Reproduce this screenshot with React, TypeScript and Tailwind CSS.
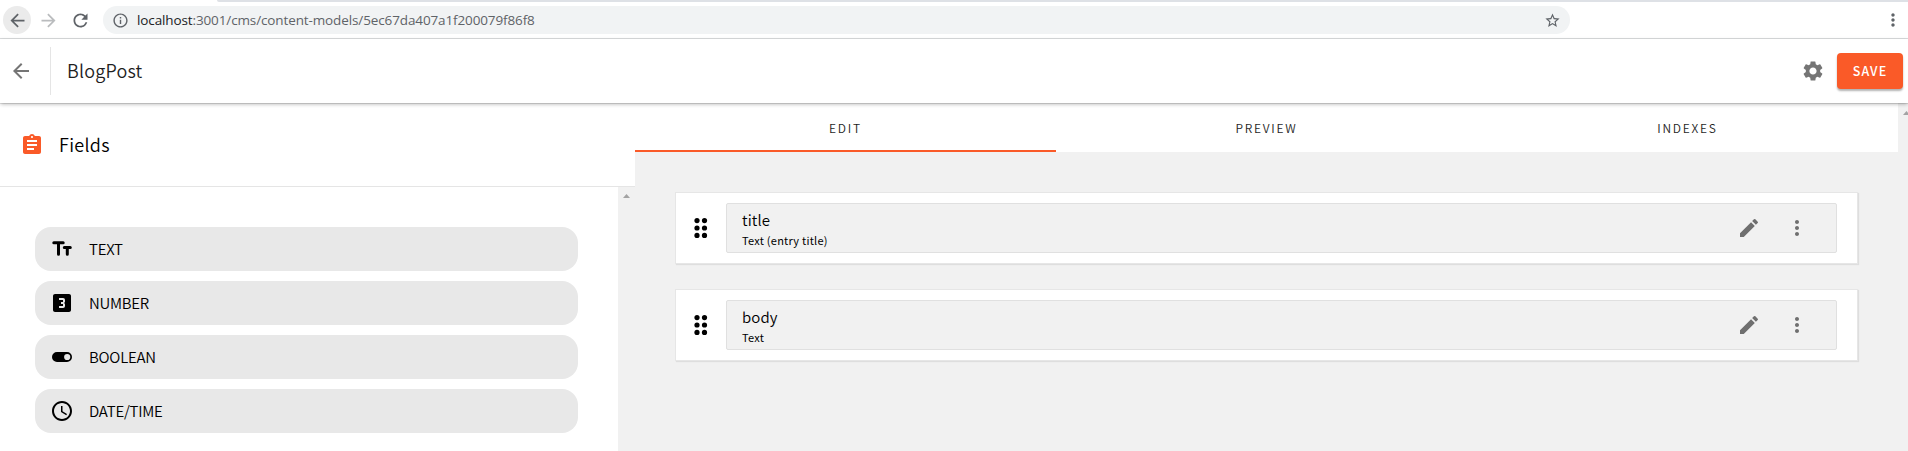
import React from "react";
import {
  MdArrowBack,
  MdArrowForward,
  MdRefresh,
  MdInfoOutline,
  MdStarBorder,
  MdMoreVert,
  MdSettings,
  MdAssignment,
  MdLooks3,
  MdAccessTime,
  MdEdit,
} from "react-icons/md";

const TextIcon = () => (
  <svg viewBox="0 0 24 24" className="h-6 w-6" fill="none" stroke="currentColor" strokeWidth="3" strokeLinecap="round">
    <path d="M3.8 5.8h9.4M8.5 5.8v11.5M14.3 10.6h6M17.3 10.6v6.7" />
  </svg>
);

const BooleanIcon = () => (
  <svg viewBox="0 0 24 24" className="h-6 w-6" fill="currentColor">
    <path
      fillRule="evenodd"
      d="M7 7h10a5 5 0 0 1 0 10H7A5 5 0 0 1 7 7Zm10.2 1.9a3.1 3.1 0 1 0 0 6.2a3.1 3.1 0 0 0 0-6.2Z"
    />
  </svg>
);

const DragHandle = () => (
  <svg viewBox="0 0 14 20" className="h-5 w-3.5" fill="black">
    {[2.6, 10, 17.4].map((y) => (
      <g key={y}>
        <circle cx="3" cy={y} r="2.6" />
        <circle cx="10.5" cy={y} r="2.6" />
      </g>
    ))}
  </svg>
);

const fieldTypes = [
  { label: "TEXT", icon: <TextIcon /> },
  { label: "NUMBER", icon: <MdLooks3 className="h-6 w-6" /> },
  { label: "BOOLEAN", icon: <BooleanIcon /> },
  { label: "DATE/TIME", icon: <MdAccessTime className="h-6 w-6" /> },
];

const modelFields = [
  { name: "title", type: "Text (entry title)" },
  { name: "body", type: "Text" },
];

function BrowserBar() {
  return (
    <div className="flex h-[39px] shrink-0 flex-col border-b border-[#d9dbdd] bg-white">
      <div className="ml-[217px] h-0.5 shrink-0 rounded-bl bg-[#dee1e6]" />
      <div className="flex h-9 items-center text-[#5f6368]">
        <div className="ml-[3px] flex h-7 w-7 items-center justify-center rounded-full bg-[#ebebeb]">
          <MdArrowBack className="h-[21px] w-[21px]" />
        </div>
        <MdArrowForward className="ml-[7px] h-[21px] w-[21px] text-[#babcbe]" />
        <MdRefresh className="ml-[11px] h-[21px] w-[21px]" />
        <div className="ml-3 flex h-7 w-[1467px] items-center rounded-full bg-[#f1f3f4] pr-[9px] pl-[9px]">
          <MdInfoOutline className="h-[17px] w-[17px]" />
          <span className="ml-2 flex-1 font-['Open_Sans',sans-serif] text-[13.5px] tracking-[-0.12px]">
            <span className="text-[#202124]">localhost</span>
            <span>:3001/cms/content-models/5ec67da407a1f200079f86f8</span>
          </span>
          <MdStarBorder className="h-[17px] w-[17px]" />
        </div>
        <MdMoreVert className="mr-[5px] ml-auto h-5 w-5" />
      </div>
    </div>
  );
}

function AppHeader() {
  return (
    <header className="relative z-10 flex h-16 shrink-0 items-center bg-white shadow-[0_2px_4px_-1px_rgba(0,0,0,0.2),0_1px_4px_0_rgba(0,0,0,0.12),0_1px_0_0_rgba(0,0,0,0.1)]">
      <MdArrowBack className="ml-[9px] h-6 w-6 text-[#757575]" />
      <div className="ml-[17px] h-12 w-px bg-[#e5e5e5]" />
      <h1 className="ml-4 pb-0.5 text-lg font-[350] tracking-[0.2px] text-[#1f1f1f]">BlogPost</h1>
      <MdSettings className="ml-auto h-6 w-6 text-[#757575]" />
      <button className="mr-[5px] ml-3 h-9 w-[66px] rounded-sm bg-[#fa5a28] pt-px text-[12.5px] font-medium tracking-[1.1px] text-white shadow-[0_2px_2px_rgba(0,0,0,0.3)]">
        SAVE
      </button>
    </header>
  );
}

function Sidebar() {
  return (
    <aside className="flex w-[635px] shrink-0 flex-col bg-white">
      <div className="flex h-[84px] shrink-0 items-center border-b border-[#e5e5e5] pl-5">
        <MdAssignment className="h-6 w-6 text-[#fa5a28]" />
        <h2 className="ml-[15px] pb-0.5 text-lg font-[350] tracking-[0.3px]">Fields</h2>
      </div>
      <div className="flex min-h-0 flex-1">
        <ul className="flex flex-1 flex-col gap-2.5 py-10 pr-10 pl-[35px]">
          {fieldTypes.map((field) => (
            <li key={field.label} className="flex h-11 shrink-0 items-center rounded-2xl bg-[#e8e8e8] pl-[15px]">
              {field.icon}
              <span className="ml-[15px] text-[15px] font-[350] tracking-[-0.25px]">{field.label}</span>
            </li>
          ))}
        </ul>
        <ScrollTrack />
      </div>
    </aside>
  );
}

function ScrollTrack() {
  return (
    <div className="flex w-[17px] shrink-0 justify-center bg-[#f1f1f1] pt-[7px]">
      <svg viewBox="0 0 7 4" className="h-1 w-[7px]" fill="#a3a3a3">
        <path d="M0 4 3.5 0 7 4Z" />
      </svg>
    </div>
  );
}

function FieldCard({ name, type }: { name: string; type: string }) {
  return (
    <li className="flex h-[72px] items-center border border-[#e6e6e6] bg-white pr-5 pl-[18px] shadow-[1px_1px_1px_rgba(0,0,0,0.08)]">
      <DragHandle />
      <div className="ml-[18px] flex h-[50px] flex-1 items-center rounded-xs border border-[#e0e0e0] bg-[#f1f1f1] pl-[15px]">
        <div className="flex flex-1 flex-col pt-[3px]">
          <span className="text-[15px] leading-5 font-[350] tracking-[0.1px]">{name}</span>
          <span className="text-[11px] leading-5 font-normal tracking-[0.25px]">{type}</span>
        </div>
        <MdEdit className="h-6 w-6 text-[#6f6f6f]" />
        <MdMoreVert className="mr-[27px] ml-6 h-6 w-6 text-[#6f6f6f]" />
      </div>
    </li>
  );
}

function Editor() {
  return (
    <main className="flex min-w-0 flex-1 bg-[#f1f1f1]">
      <div className="flex flex-1 flex-col">
        <nav className="grid h-[49px] shrink-0 grid-cols-3 bg-white text-xs font-[350] tracking-[1.75px] text-[#1f1f1f]">
          <button className="border-b-2 border-[#fa5a28] pt-[3px]">EDIT</button>
          <button className="border-b-2 border-white pt-[3px]">PREVIEW</button>
          <button className="border-b-2 border-white pt-[3px]">INDEXES</button>
        </nav>
        <ul className="flex flex-col gap-[25px] pt-10 pr-10 pl-10">
          {modelFields.map((field) => (
            <FieldCard key={field.name} name={field.name} type={field.type} />
          ))}
        </ul>
      </div>
      <div className="flex w-2.5 shrink-0 justify-end overflow-hidden pt-2">
        <svg viewBox="0 0 5 4" className="h-1 w-[5px]" fill="#a3a3a3">
          <path d="M0 4 3.5 0 5 1.7V4Z" />
        </svg>
      </div>
    </main>
  );
}

export default function App() {
  return (
    <div className="flex h-[451px] w-full flex-col overflow-hidden bg-white font-['Noto_Sans_CJK_SC',sans-serif] text-black">
      <BrowserBar />
      <AppHeader />
      <div className="flex min-h-0 flex-1 overflow-hidden">
        <Sidebar />
        <Editor />
      </div>
    </div>
  );
}
